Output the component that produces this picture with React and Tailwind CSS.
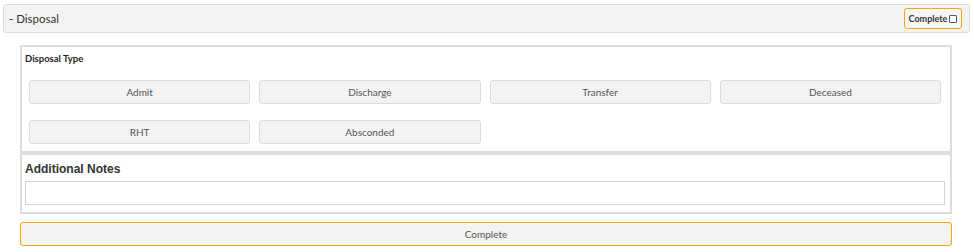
import React from "react";

const Btn = ({ children }) => (
  <button className="h-[24px] rounded-[3px] border border-[#dcdcdc] bg-[#f3f3f3] text-[10px] text-[#555] font-['Lato',sans-serif] leading-none pb-[1px]">
    {children}
  </button>
);

export default function App() {
  return (
    <div className="w-[974px] h-[252px] bg-white pt-[4px] pl-[3px] font-['Lato',sans-serif]">
      <div className="w-[967px] h-[29px] rounded-[3px] border border-[#dcdcdc] bg-[#f3f3f3] flex items-center justify-between pl-[5px] pr-[7px]">
        <span className="text-[11.5px] text-[#333]">- Disposal</span>
        <div className="h-[21px] w-[58px] rounded-[3px] border border-[#ffa500] bg-[#f7f7f7] flex items-center justify-center gap-[2px]">
          <span className="text-[9px] font-bold text-[#333]">Complete</span>
          <span className="w-[8px] h-[8px] border border-[#555] rounded-[1px] bg-white"></span>
        </div>
      </div>
      <div className="ml-[17px] w-[932px] mt-[12px]">
        <div className="border-2 border-[#dcdcdc]">
          <div className="pt-[5px] pb-[7px] px-[3px]">
            <div className="text-[9.5px] font-bold text-[#222] h-[14px] leading-[14px]">Disposal Type</div>
            <div className="grid grid-cols-4 gap-x-[9px] gap-y-[16px] ml-[4px] mr-[6px] mt-[14px]">
              <Btn>Admit</Btn>
              <Btn>Discharge</Btn>
              <Btn>Transfer</Btn>
              <Btn>Deceased</Btn>
              <Btn>RHT</Btn>
              <Btn>Absconded</Btn>
            </div>
          </div>
          <div className="border-t-4 border-[#dcdcdc] pt-[6px] pb-[7px] px-[3px]">
            <div className="font-['Liberation_Sans',Arial,sans-serif] font-bold text-[12px] text-[#333] h-[16px] leading-[16px]">
              Additional Notes
            </div>
            <div className="mt-[4px] mr-[2px] h-[24px] border border-[#cfd3dc] bg-white"></div>
          </div>
        </div>
        <button className="mt-[8px] w-full h-[24px] rounded-[3px] border border-[#ffa500] bg-[#f3f3f3] text-[10px] text-[#555] leading-none pb-[1px]">
          Complete
        </button>
      </div>
    </div>
  );
}
